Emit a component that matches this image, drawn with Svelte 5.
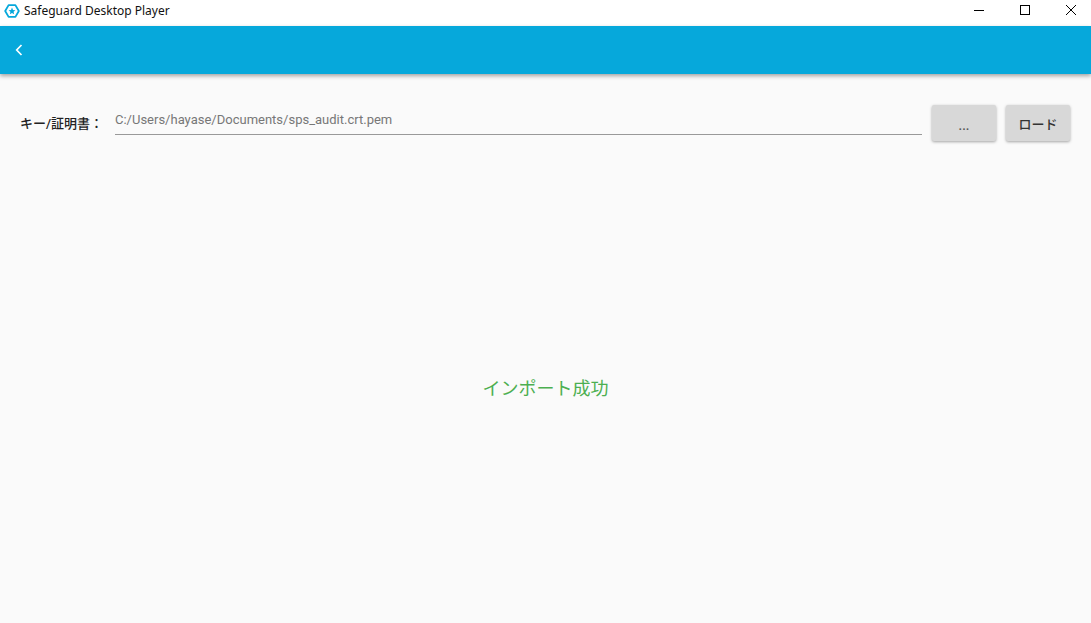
<script>
  const title = 'Safeguard Desktop Player';
</script>

<div class="window">
  <header class="titlebar">
    <svg class="logo" width="16" height="16" viewBox="0 0 16 16">
      <path d="M8 1.2 13.9 4.6V11.4L8 14.8 2.1 11.4V4.6Z" fill="none" stroke="#06a8db" stroke-width="1.8" stroke-linejoin="round" transform="rotate(30 8 8)"/>
      <path d="M8 4.6 9 7 11.4 7.2 9.6 8.8 10.1 11.2 8 9.9 5.9 11.2 6.4 8.8 4.6 7.2 7 7Z" fill="#06a8db"/>
    </svg>
    <span class="title">{title}</span>
    <div class="controls">
      <svg class="ctl" width="46" height="20" viewBox="0 0 46 20"><path d="M18 10.5H28" stroke="#000" fill="none"/></svg>
      <svg class="ctl" width="46" height="20" viewBox="0 0 46 20"><rect x="18.5" y="5.5" width="9" height="9" stroke="#000" fill="none"/></svg>
      <svg class="ctl" width="46" height="20" viewBox="0 0 46 20"><path d="M18 5 28 15M28 5 18 15" stroke="#000" fill="none" stroke-width="1"/></svg>
    </div>
  </header>

  <nav class="appbar">
    <svg width="10" height="14" viewBox="0 0 10 14"><path d="M7.5 2 2.7 7 7.5 12" stroke="#fff" stroke-width="1.7" fill="none"/></svg>
  </nav>

  <main class="content">
    <div class="row">
      <span class="label">キー/証明書：</span>
      <div class="field">C:/Users/hayase/Documents/sps_audit.crt.pem</div>
      <button class="btn dots">...</button>
      <button class="btn">ロード</button>
    </div>
    <div class="status">インポート成功</div>
  </main>
</div>

<style>
  :global(body) {
    margin: 0;
    background: #fafafa;
  }
  .window {
    width: 1091px;
    height: 623px;
    display: flex;
    flex-direction: column;
    overflow: hidden;
    font-family: Roboto, "Noto Sans CJK JP", sans-serif;
  }
  .titlebar {
    height: 26px;
    flex: none;
    background: #fff;
    display: flex;
    align-items: center;
    padding-left: 4px;
    font-family: "Noto Sans", "Open Sans", sans-serif;
  }
  .logo {
    margin-top: -5px;
  }
  .title {
    margin-left: 4px;
    margin-top: -5px;
    font-size: 12px;
    color: #111;
  }
  .controls {
    margin-left: auto;
    display: flex;
    margin-top: -6px;
    margin-right: -3px;
  }
  .ctl {
    display: block;
  }
  .appbar {
    height: 48px;
    flex: none;
    background: #06a8db;
    box-shadow: 0 2px 4px rgba(0, 0, 0, 0.35);
    display: flex;
    align-items: center;
    padding-left: 14px;
    position: relative;
  }
  .content {
    flex: 1;
    display: flex;
    flex-direction: column;
    background: #fafafa;
  }
  .row {
    display: flex;
    align-items: flex-start;
    padding: 31px 21px 0 20px;
  }
  .label {
    font-size: 13px;
    line-height: 18px;
    margin-top: 10px;
    width: 95px;
    flex: none;
    color: #222;
    font-weight: 500;
    white-space: nowrap;
  }
  .field {
    flex: 1;
    height: 29px;
    border-bottom: 1px solid #999;
    font-size: 13px;
    line-height: 30px;
    color: #777;
    box-sizing: content-box;
    margin-right: 10px;
  }
  .btn {
    width: 64px;
    height: 36px;
    margin: 0;
    border: none;
    border-radius: 2px;
    background: #d8d8d8;
    box-shadow: 0 1px 3px rgba(0, 0, 0, 0.35);
    font-family: inherit;
    font-size: 13px;
    font-weight: 500;
    color: #333;
    padding: 0;
  }
  .dots {
    margin-right: 10px;
    padding-top: 5px;
    color: #555;
  }
  .status {
    text-align: center;
    margin-top: 235px;
    font-size: 18px;
    line-height: 26px;
    color: #4caf50;
    padding-left: 0;
  }
</style>
